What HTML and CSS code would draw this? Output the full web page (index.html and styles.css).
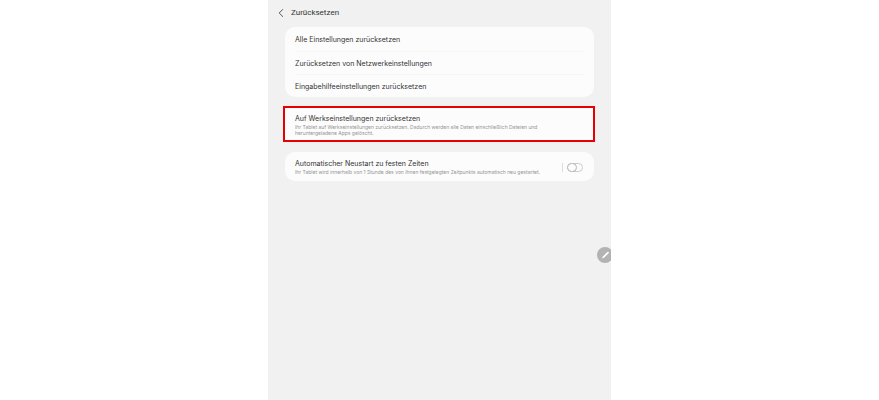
FILE: index.html
```html
<!DOCTYPE html>
<html lang="de">
<head>
    <meta charset="UTF-8">
    <meta name="viewport" content="width=device-width, initial-scale=1.0">
    <title>Zurücksetzen</title>
    <link rel="stylesheet" href="styles.css">
</head>
<body>
    <main class="screen">
        <header class="top-bar">
            <button class="back-btn" aria-label="Zurück">
                <svg width="6" height="10" viewBox="0 0 6 10"><path d="M5 1.2L1.2 5L5 8.8" fill="none" stroke="#444" stroke-width="0.9"/></svg>
            </button>
            <h1>Zurücksetzen</h1>
        </header>

        <section class="card list">
            <button class="row">Alle Einstellungen zurücksetzen</button>
            <button class="row">Zurücksetzen von Netzwerkeinstellungen</button>
            <button class="row">Eingabehilfeeinstellungen zurücksetzen</button>
        </section>

        <button class="card highlight">
            <span class="title">Auf Werkseinstellungen zurücksetzen</span>
            <span class="info">Ihr Tablet auf Werkseinstellungen zurücksetzen. Dadurch werden alle Daten einschließlich Dateien und heruntergeladene Apps gelöscht.</span>
        </button>

        <section class="card restart">
            <label class="restart-text" for="auto-restart">
                <span class="title">Automatischer Neustart zu festen Zeiten</span>
                <span class="info">Ihr Tablet wird innerhalb von 1 Stunde des von Ihnen festgelegten Zeitpunkts automatisch neu gestartet.</span>
            </label>
            <span class="divider"></span>
            <input class="switch" type="checkbox" role="switch" id="auto-restart">
        </section>

        <button class="edit-btn" aria-label="Bearbeiten">
            <svg width="16" height="16" viewBox="0 0 16 16"><path d="M6.4 10.2L11 5.6" stroke="#fff" stroke-width="1.7" stroke-linecap="round"/><path d="M5.2 11.4L6.4 10.2" stroke="#fff" stroke-width="0.8"/></svg>
        </button>
    </main>
</body>
</html>
```

FILE: styles.css
```css
*, *::before {
    box-sizing: border-box;
}
body {
    margin: 0;
    background: #fff;
    font-family: Inter, Roboto, sans-serif;
    color: #333;
}
button {
    margin: 0;
    padding: 0;
    border: none;
    background: none;
    font-family: inherit;
    color: inherit;
    text-align: left;
    cursor: pointer;
}
.screen {
    position: relative;
    max-width: 343px;
    min-height: 100vh;
    margin: 0 auto;
    padding: 0 17px;
    background: #f1f1f1;
    overflow: hidden;
}
.top-bar {
    display: flex;
    align-items: center;
    gap: 7px;
    height: 26px;
    margin: 0 0 1px -7px;
}
.back-btn {
    display: flex;
}
h1 {
    margin: 0;
    font-family: Roboto, sans-serif;
    font-size: 8px;
    line-height: 10px;
    font-weight: 400;
}
.card {
    background: #fcfcfc;
    border-radius: 10px;
}
.list {
    padding: 1px 10px 0;
}
.row {
    display: block;
    width: 100%;
    height: 23px;
    font-size: 7px;
    line-height: 9px;
}
.row + .row {
    padding-top: 1px;
    border-top: 1px solid #f5f5f5;
}
.highlight {
    display: block;
    width: calc(100% + 3px);
    margin: 9px -1px 10px -2px;
    padding: 6px 40px 4px 10px;
    border: 2px solid #e60000;
    border-radius: 0;
}
.title {
    display: block;
    font-size: 7px;
    line-height: 9px;
}
.info {
    display: block;
    margin-top: 1px;
    font-size: 5px;
    line-height: 6px;
    color: #949494;
}
.restart {
    display: flex;
    align-items: center;
    padding: 7px 11px 6px 10px;
}
.restart-text {
    flex: 1;
}
.divider {
    width: 1px;
    height: 9px;
    margin-right: 4px;
    background: #ddd;
}
.switch {
    appearance: none;
    display: flex;
    width: 16px;
    height: 9px;
    margin: 0;
    border: 1px solid #ccc;
    border-radius: 5px;
    cursor: pointer;
}
.switch::before {
    content: "";
    width: 10px;
    height: 9px;
    margin: -1px;
    border: 1px solid #b5b5b5;
    border-radius: 5px;
    background: #fcfcfc;
}
.switch:checked {
    justify-content: flex-end;
    background: #3e7bdc;
}
/* floating pen button, half off the right edge */
.edit-btn {
    position: absolute;
    top: 247px;
    right: -2px;
    width: 16px;
    height: 16px;
    border-radius: 50%;
    background: #b3b3b3;
}
.edit-btn svg {
    display: block;
}
```
